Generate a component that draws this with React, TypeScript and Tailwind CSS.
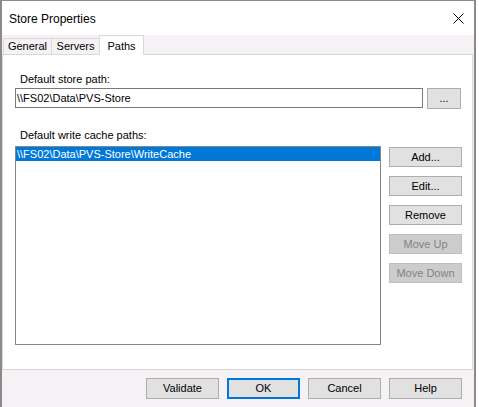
import React from "react";

const Btn = ({
  children,
  w = "w-[73px]",
  h = "h-[21px]",
  disabled = false,
  primary = false,
}: {
  children: React.ReactNode;
  w?: string;
  h?: string;
  disabled?: boolean;
  primary?: boolean;
}) => {
  const cls = disabled
    ? "bg-[#cccccc] border border-[#bfbfbf] text-[#838383]"
    : primary
    ? "bg-[#e1e1e1] border-2 border-[#0078d7] text-black"
    : "bg-[#e1e1e1] border border-[#adadad] text-black";
  return (
    <div className={`${w} ${h} ${cls} flex items-center justify-center shrink-0 leading-none`}>
      {children}
    </div>
  );
};

export default function App() {
  return (
    <div
      className="w-[479px] h-[407px] bg-white overflow-hidden text-[11px] text-black"
      style={{ fontFamily: '"Liberation Sans", Arial, sans-serif' }}
    >
      <div className="w-[476px] h-[407px] border-l-2 border-r-2 border-t border-[#8a8a8a] bg-[#f5f1f5] flex flex-col">
        {/* Title bar */}
        <div className="h-[34px] bg-white flex items-center justify-between pl-[7px] pr-[10px] pt-[2px] shrink-0">
          <span className="text-[12px]">Store Properties</span>
          <svg width="11" height="11" viewBox="0 0 11 11" className="mt-[-1px]">
            <path d="M0.5 0.5 L10.5 10.5 M10.5 0.5 L0.5 10.5" stroke="#000" strokeWidth="1" fill="none" />
          </svg>
        </div>
        {/* Tabs */}
        <div className="h-[19px] flex items-end pl-[1px] shrink-0">
          <div className="w-[49px] h-[16px] border border-b-0 border-[#d9d9d9] flex items-center justify-center">
            General
          </div>
          <div className="w-[47px] h-[16px] border-t border-[#d9d9d9] flex items-center justify-center">
            Servers
          </div>
          <div className="w-[45px] h-[20px] mb-[-1px] relative z-10 bg-white border border-b-0 border-[#d9d9d9] flex items-start justify-center pt-[2px]">
            Paths
          </div>
        </div>
        {/* Panel */}
        <div className="h-[316px] mr-[1px] bg-white border border-[#d9d9d9] flex flex-col shrink-0">
          <div className="ml-[17px] mt-[17px] h-[15px] leading-[15px]">Default store path:</div>
          <div className="ml-[12px] mt-[1px] flex gap-[4px]">
            <div className="w-[408px] h-[20px] border border-[#7a7a7a] flex items-center pl-[1px]">
              {"\\\\FS02\\Data\\PVS-Store"}
            </div>
            <Btn w="w-[34px]">...</Btn>
          </div>
          <div className="ml-[17px] mt-[19px] h-[15px] leading-[15px]">Default write cache paths:</div>
          <div className="ml-[12px] mt-[3px] flex">
            <div className="w-[366px] h-[199px] border border-[#828790]">
              <div className="h-[14px] bg-[#0078d7] text-white flex items-center pl-[1px]">
                {"\\\\FS02\\Data\\PVS-Store\\WriteCache"}
              </div>
            </div>
            <div className="ml-[8px] pt-[1px] flex flex-col gap-[9px]">
              <Btn h="h-[20px]">Add...</Btn>
              <Btn h="h-[20px]">Edit...</Btn>
              <Btn h="h-[20px]">Remove</Btn>
              <Btn h="h-[20px]" disabled>
                Move Up
              </Btn>
              <Btn h="h-[20px]" disabled>
                Move Down
              </Btn>
            </div>
          </div>
        </div>
        {/* Bottom buttons */}
        <div className="flex-1 pt-[8px] pr-[12px] flex justify-end gap-[8px]">
          <Btn>Validate</Btn>
          <Btn primary>OK</Btn>
          <Btn>Cancel</Btn>
          <Btn>Help</Btn>
        </div>
      </div>
    </div>
  );
}
